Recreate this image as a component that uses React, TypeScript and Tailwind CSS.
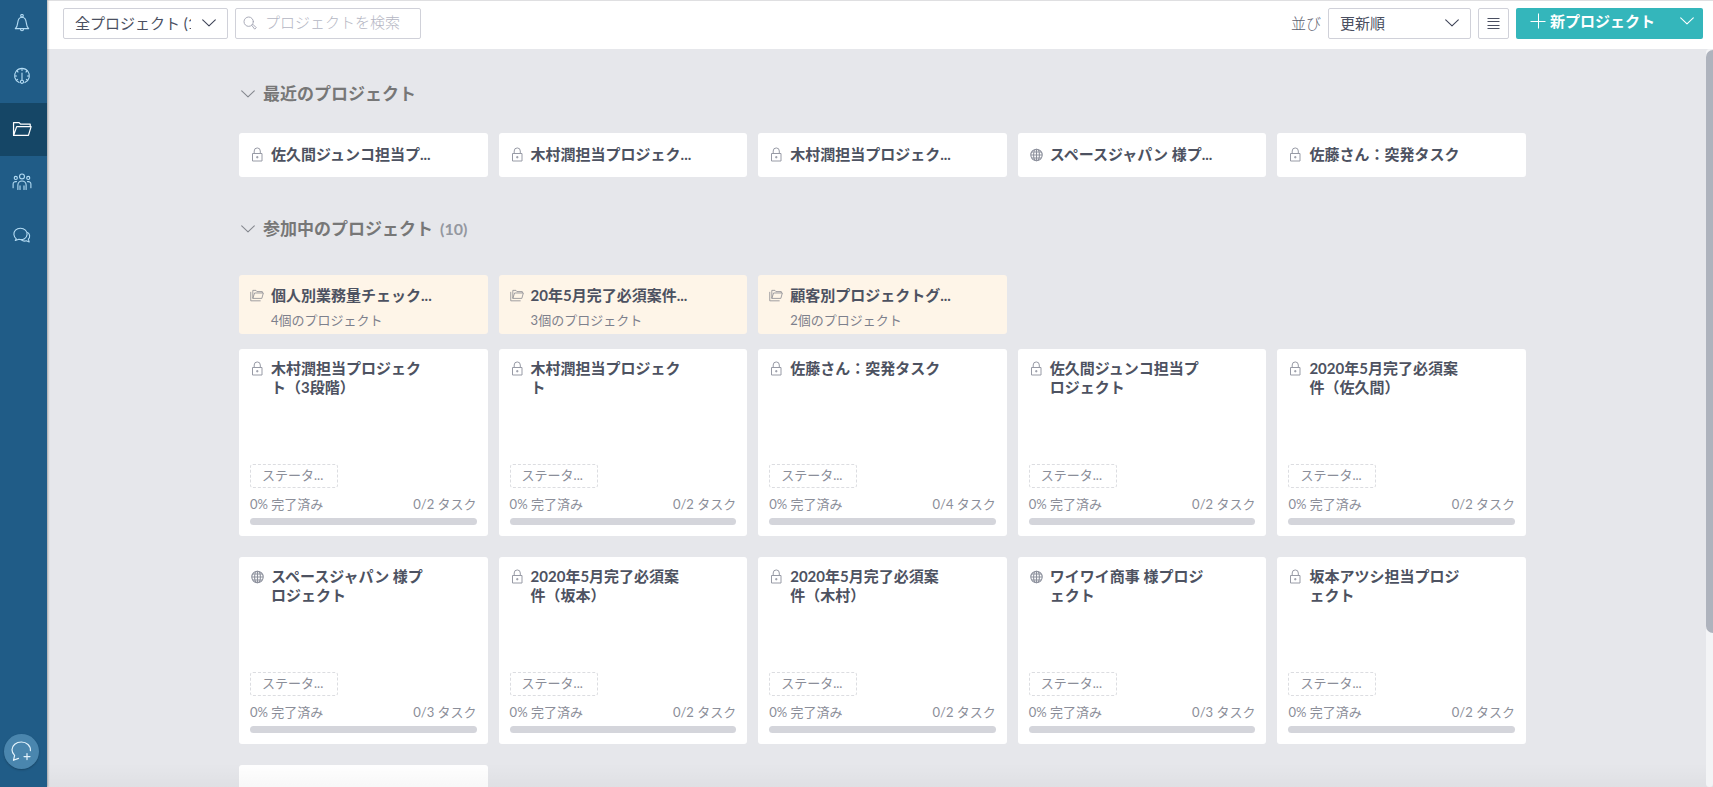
import { type ReactNode } from "react";

type Kind = "lock" | "globe";
type Project = { title: string; kind: Kind; total: number };

const recent: { title: string; kind: Kind }[] = [
  { title: "佐久間ジュンコ担当プ...", kind: "lock" },
  { title: "木村潤担当プロジェク...", kind: "lock" },
  { title: "木村潤担当プロジェク...", kind: "lock" },
  { title: "スペースジャパン 様プ...", kind: "globe" },
  { title: "佐藤さん：突発タスク", kind: "lock" },
];

const groups = [
  { title: "個人別業務量チェック...", count: 4 },
  { title: "20年5月完了必須案件...", count: 3 },
  { title: "顧客別プロジェクトグ...", count: 2 },
];

const projects: Project[] = [
  { title: "木村潤担当プロジェクト（3段階）", kind: "lock", total: 2 },
  { title: "木村潤担当プロジェクト", kind: "lock", total: 2 },
  { title: "佐藤さん：突発タスク", kind: "lock", total: 4 },
  { title: "佐久間ジュンコ担当プロジェクト", kind: "lock", total: 2 },
  { title: "2020年5月完了必須案件（佐久間）", kind: "lock", total: 2 },
  { title: "スペースジャパン 様プロジェクト", kind: "globe", total: 3 },
  { title: "2020年5月完了必須案件（坂本）", kind: "lock", total: 2 },
  { title: "2020年5月完了必須案件（木村）", kind: "lock", total: 2 },
  { title: "ワイワイ商事 様プロジェクト", kind: "globe", total: 3 },
  { title: "坂本アツシ担当プロジェクト", kind: "lock", total: 2 },
];

function Line({ size = 18, width = 1.2, className = "", children }: { size?: number; width?: number; className?: string; children: ReactNode }) {
  return (
    <svg width={size} height={size} viewBox="0 0 18 18" fill="none" stroke="currentColor" strokeWidth={width} strokeLinecap="round" strokeLinejoin="round" className={className} aria-hidden="true">
      {children}
    </svg>
  );
}

function Chevron({ className = "" }: { className?: string }) {
  return (
    <svg width="14" height="8" viewBox="0 0 14 8" fill="none" stroke="currentColor" strokeWidth="1.1" strokeLinecap="round" strokeLinejoin="round" className={className} aria-hidden="true">
      <path d="M0.7 0.9 7 6.9 13.3 0.9" />
    </svg>
  );
}

function LockIcon() {
  return (
    <svg width="13" height="15" viewBox="0 0 13 15" fill="none" stroke="currentColor" strokeWidth="1" className="ml-px text-[#989ba6]" aria-hidden="true">
      <path d="M1.500 6.500h9.500v7.500h-9.500zM3.200 6.500V4a3 3 0 0 1 6.100 0v2.500" />
      <path d="M6.250 9v2.400M5.050 10.200h2.400" />
    </svg>
  );
}

function GlobeIcon() {
  return (
    <svg width="14" height="15" viewBox="0 0 14 15" fill="none" stroke="currentColor" strokeWidth="1.1" className="text-[#8d919d]" aria-hidden="true">
      <circle cx="7.500" cy="8" r="5.700" />
      <ellipse cx="7.500" cy="8" rx="2.900" ry="5.700" />
      <path d="M7.500 2.300v11.400M1.800 8h11.400M2.600 5h9.800M2.600 11h9.800" />
    </svg>
  );
}

function StackIcon() {
  return (
    <svg width="15" height="13" viewBox="0 0 15 13" fill="none" stroke="currentColor" strokeWidth="0.9" strokeLinejoin="round" className="text-[#8f8f95]" aria-hidden="true">
      <path d="M3 9.600V1h3.400l1 1.300h5.800v1.500M3 9.600l1.900-5.800h9.400l-1.600 5.800zM0.800 2.600v9.600h10.600" />
    </svg>
  );
}

const kindIcon = { lock: <LockIcon />, globe: <GlobeIcon /> };

const nav: { label: string; active?: boolean; icon: ReactNode }[] = [
  {
    label: "通知",
    icon: (
      <Line width={1.1}>
        <path d="M2.300 14.600h13.400c-1.700-1.300-2.100-2.900-2.400-5.700-.3-3.200-1.600-5.700-4.300-5.700s-4 2.500-4.300 5.700c-.3 2.800-.7 4.400-2.400 5.700z" />
        <path d="M7.500 14.900a1.500 1.900 0 0 0 3 0" />
        <circle cx="9" cy="1.800" r="1.300" />
      </Line>
    ),
  },
  {
    label: "ダッシュボード",
    icon: (
      <Line width={1.1}>
        <path d="M6.100 15.600A7.400 7.400 0 1 1 11.900 15.600" />
        <path d="M9 6v7M9 1.800v1.700M4 4l1 1M14 4l-1 1M2 9h1.600M16 9h-1.600M3.500 13.100l1.100-.7M14.500 13.100l-1.100-.7" />
        <circle cx="9" cy="14.800" r="1.600" />
      </Line>
    ),
  },
  {
    label: "プロジェクト",
    active: true,
    icon: (
      <Line size={20} width={1.1}>
        <path d="M1.400 14.800V3.200h5l1.300 1.500h8.700v2.200M1.400 14.800 4.200 6.900h13l-2.400 7.900z" />
      </Line>
    ),
  },
  {
    label: "メンバー",
    icon: (
      <Line size={20} width={1}>
        <circle cx="9" cy="4" r="2.200" />
        <circle cx="3.400" cy="5.300" r="1.400" />
        <circle cx="14.600" cy="5.300" r="1.400" />
        <path d="M5.300 15.800v-4a3.700 3.700 0 0 1 7.400 0v4M7.200 15.800v-3.300M10.800 15.800v-3.300M1 14.200v-3.400c0-1.400 1.200-2.300 3-2.100M17 14.200v-3.400c0-1.400-1.200-2.300-3-2.100" />
      </Line>
    ),
  },
  {
    label: "チャット",
    icon: (
      <Line width={1.1}>
        <path d="M3.300 12.800C.3 10.300.2 6.500 2.500 4.200c2.600-2.600 7.200-2.600 9.900-.1 2.600 2.500 2.200 6.700-.9 8.600-1.700 1-3.800 1.200-5.600.6L2.300 14.500z" />
        <path d="M14.600 6.600c2.300 1.300 2.900 4.700.7 6.600l.9 2.700-2.900-1.100c-1.700.5-3.700.2-4.900-.9" />
      </Line>
    ),
  },
];

function Sidebar() {
  return (
    <aside className="relative z-10 flex w-[47px] shrink-0 flex-col justify-between bg-[#205c87] shadow-[1px_0_2px_rgba(0,0,0,0.3)]">
      <nav className="-mt-[3px]">
        {nav.map((n) => (
          <a
            key={n.label}
            href="#"
            aria-label={n.label}
            className={n.active ? "flex h-[53px] items-center bg-[#154666] pb-px pl-[11px] text-white" : "flex h-[53px] items-center pb-px pl-[11px] text-[#b4dcf4]"}
          >
            <span className="flex w-[21px] justify-center">{n.icon}</span>
          </a>
        ))}
      </nav>
      <button type="button" aria-label="新しいチャット" className="mb-[18px] ml-1 flex size-[35px] items-center justify-center rounded-full bg-[#4a86ae] text-[#e4f3fc] shadow-[0_1px_2px_rgba(0,0,0,0.25)]">
        <svg width="21" height="21" viewBox="0 0 21 21" fill="none" stroke="currentColor" strokeWidth="1.2" strokeLinecap="round" strokeLinejoin="round" aria-hidden="true">
          <path d="M19.400 9.600C19.800 4.800 15.600 1 10.400 1 5.200 1 1 4.400 1 8.800c0 2.400 1 4.100 2.600 5.600L2.500 19.300l5-1.900" />
          <path d="M16 12.600v6M13 15.600h6" />
        </svg>
      </button>
    </aside>
  );
}

const box = "h-[31px] rounded-[2px] border border-[#d0d1d9] bg-white";

function Toolbar() {
  return (
    <header className="flex h-[49px] shrink-0 justify-between border-t border-[#dfdfe1] bg-white pr-[10px] pl-4 pt-[7px] text-[15px]">
      <div className="flex gap-[7px]">
        <div className="relative">
          <select aria-label="表示するプロジェクト" className={`${box} w-[165px] appearance-none pr-[36px] pl-[11px] font-normal text-[#4a4f61]`}>
            <option>全プロジェクト (13)</option>
          </select>
          <Chevron className="pointer-events-none absolute top-[11px] right-3 text-[#3f4458]" />
        </div>
        <div className="relative">
          <Line size={14} width={1.2} className="pointer-events-none absolute top-2 left-2 text-[#a3a5b3]">
            <circle cx="7.300" cy="7.300" r="6" />
            <path d="m11.700 11.700 1-1 4.300 4.300-1.600 1.600z" />
          </Line>
          <input type="search" aria-label="プロジェクトを検索" placeholder="プロジェクトを検索" className={`${box} w-[186px] pb-[3px] pl-[29px] font-light placeholder:text-[#b4b6c3]`} />
        </div>
      </div>
      <div className="flex gap-[7px]">
        <label htmlFor="sort" className="flex h-[31px] items-center font-light text-[#5d606f]">並び</label>
        <div className="relative">
          <select id="sort" className={`${box} w-[143px] appearance-none pl-[11px] font-normal text-[#4a4f61]`}>
            <option>更新順</option>
          </select>
          <Chevron className="pointer-events-none absolute top-[11px] right-3 text-[#3f4458]" />
        </div>
        <button type="button" aria-label="リスト表示" className={`${box} flex w-[31px] items-center justify-center text-[#4a4f61]`}>
          <svg width="13" height="11" viewBox="0 0 13 11" stroke="currentColor" strokeWidth="1" aria-hidden="true">
            <path d="M0.500 0.500h12M0.500 3.500h12M0.500 7.500h12M0.500 10.500h12" />
          </svg>
        </button>
        <button type="button" className="flex h-[31px] w-[187px] items-center rounded-[2px] bg-[#34b6bb] pr-[9px] pb-[5px] pl-[14px] font-bold text-white">
          <svg width="16" height="16" viewBox="0 0 16 16" stroke="currentColor" strokeWidth="1" aria-hidden="true">
            <path d="M8.500 0.500v15M0.500 8.500h15" />
          </svg>
          <span className="ml-1">新プロジェクト</span>
          <Chevron className="ml-auto" />
        </button>
      </div>
    </header>
  );
}

function SectionTitle({ children, count }: { children: ReactNode; count?: number }) {
  return (
    <h2 className="text-[17px] leading-6 font-bold text-[#777777]">
      <button type="button" className="flex items-center pl-[2px]">
        <Chevron className="mr-2 text-[#85888f]" />
        {children}
        {count !== undefined && <span className="ml-[7px] text-base text-[#94979f]">({count})</span>}
      </button>
    </h2>
  );
}

const grid = "grid grid-cols-5 gap-x-[11px]";
const title = "text-[15px] leading-[19px] font-bold text-[#4d5261]";

function ProjectCard({ p }: { p: Project }) {
  return (
    <article className="flex h-[187px] flex-col rounded-[3px] bg-white px-[11px] pt-[10px] pb-[11px]">
      <div className="flex gap-[7px]">
        <span className="flex h-[19px] w-[14px] items-center">{kindIcon[p.kind]}</span>
        <h3 className={`${title} w-[158px] [line-break:anywhere]`}>{p.title}</h3>
      </div>
      <button type="button" className="mt-auto h-6 w-[88px] rounded-[3px] border border-dashed border-[#dcdde1] pb-[3px] pl-[11px] text-left text-[13px] leading-5 font-normal text-[#8b8e99]">
        ステータ...
      </button>
      <div className="mt-[6px] mb-[4px] flex justify-between text-[13px] leading-5 font-normal text-[#8b8e99]">
        <span>0% 完了済み</span>
        <span>0/{p.total} タスク</span>
      </div>
      <div role="progressbar" aria-label="進捗" aria-valuenow={0} aria-valuemin={0} aria-valuemax={p.total} className="h-[7px] rounded-full bg-[#d4d5db]" />
    </article>
  );
}

export default function App() {
  return (
    <div lang="ja" className="flex h-screen overflow-hidden bg-[#e6e7eb] font-['Lato','Noto_Sans_CJK_JP',sans-serif]">
      <Sidebar />
      <div className="flex min-w-0 flex-1 flex-col">
        <Toolbar />
        <main className="relative min-h-0 flex-1 overflow-hidden pl-[5px]">
          <div className="mx-auto max-w-[1287px] pt-[33px]">
            <SectionTitle>最近のプロジェクト</SectionTitle>
            <div className={`${grid} mt-[27px]`}>
              {recent.map((r, i) => (
                <a key={i} href="#" className="flex h-[44px] items-center gap-[7px] rounded-[3px] bg-white px-[11px] pb-[2px]">
                  <span className="flex w-[14px]">{kindIcon[r.kind]}</span>
                  <span className={`${title} whitespace-nowrap`}>{r.title}</span>
                </a>
              ))}
            </div>
            <div className="mt-[40px]">
              <SectionTitle count={10}>参加中のプロジェクト</SectionTitle>
            </div>
            <div className={`${grid} mt-[34px]`}>
              {groups.map((g) => (
                <a key={g.title} href="#" className="flex h-[59px] gap-[7px] rounded-[3px] bg-[#fef5e8] px-[11px] pt-[11px]">
                  <span className="flex h-[19px] w-[14px] items-center">
                    <StackIcon />
                  </span>
                  <span>
                    <span className={`${title} block whitespace-nowrap`}>{g.title}</span>
                    <span className="mt-[5px] block text-[13px] leading-5 font-normal text-[#7d808c]">{g.count}個のプロジェクト</span>
                  </span>
                </a>
              ))}
            </div>
            <div className={`${grid} mt-[15px] gap-y-[21px]`}>
              {projects.map((p) => (
                <ProjectCard key={p.title} p={p} />
              ))}
              <div className="h-[187px] rounded-[3px] bg-white" />
            </div>
          </div>
          <div className="pointer-events-none absolute inset-x-0 bottom-0 h-6 bg-linear-to-b from-transparent to-black/3" />
          <div className="absolute inset-y-0 right-0 w-[7px] rounded-lg bg-[#f3f4f6]">
            <div className="mt-px h-[79%] rounded-l-[7px] bg-[#aeb3bd]" />
          </div>
        </main>
      </div>
    </div>
  );
}
